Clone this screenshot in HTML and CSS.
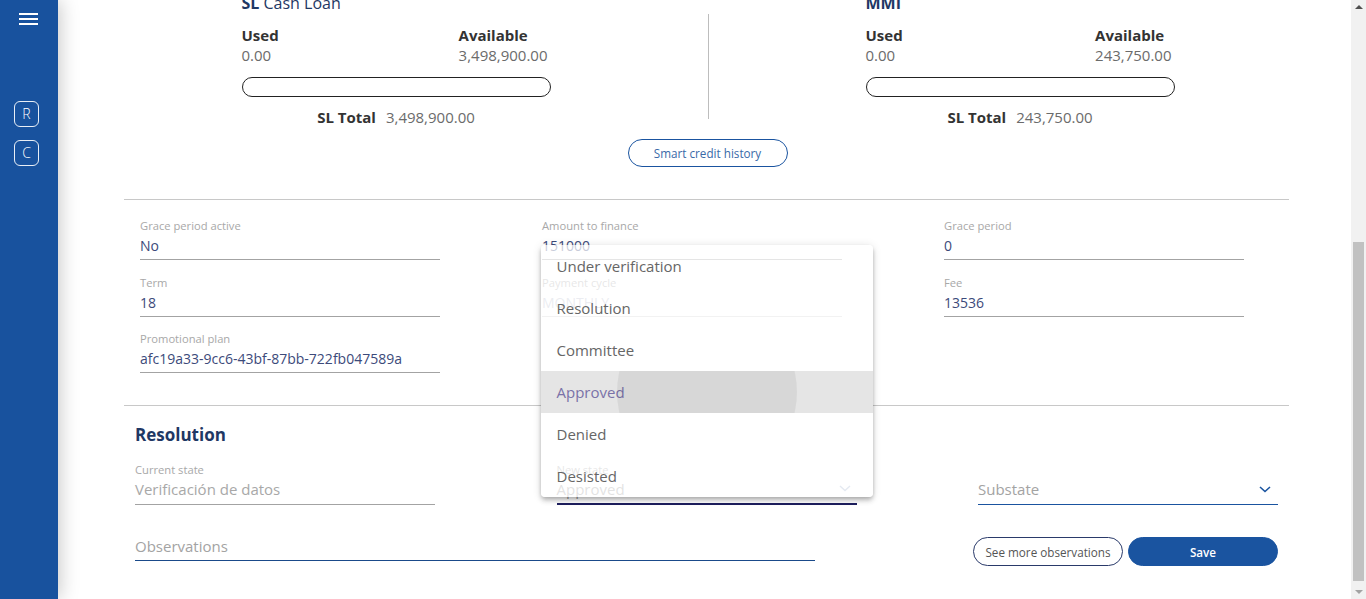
FILE: index.html
```html
<!DOCTYPE html>
<html lang="en">
<head>
<meta charset="utf-8">
<title>Credit request</title>
<link rel="stylesheet" href="styles.css">
</head>
<body>
<div class="app">
<nav class="sidebar">
  <button class="menu-btn" aria-label="Menu">
    <svg width="19" height="12" viewBox="0 0 19 12"><rect x="0" y="0" width="19" height="2" fill="#fff"/><rect x="0" y="5" width="19" height="2" fill="#fff"/><rect x="0" y="10" width="19" height="2" fill="#fff"/></svg>
  </button>
  <div class="nav-badges">
    <span class="badge">R</span>
    <span class="badge">C</span>
  </div>
</nav>

<main class="main" id="main">
  <div class="content">
    <section class="summary">
      <h1 class="page-title">Credit request</h1>
      <p class="summary-text">Client lines of credit</p>
    </section>

    <section class="lines">
      <div class="line-block">
        <h3 class="line-title"><b>SL</b> Cash Loan</h3>
        <div class="amounts">
          <div class="amount"><span class="amount-label">Used</span><span class="amount-value">0.00</span></div>
          <div class="amount"><span class="amount-label">Available</span><span class="amount-value">3,498,900.00</span></div>
        </div>
        <div class="bar"></div>
        <div class="total"><b>SL Total</b><span>3,498,900.00</span></div>
      </div>
      <div class="vline"></div>
      <div class="line-block">
        <h3 class="line-title"><b>MMI</b></h3>
        <div class="amounts">
          <div class="amount"><span class="amount-label">Used</span><span class="amount-value">0.00</span></div>
          <div class="amount"><span class="amount-label">Available</span><span class="amount-value">243,750.00</span></div>
        </div>
        <div class="bar"></div>
        <div class="total"><b>SL Total</b><span>243,750.00</span></div>
      </div>
    </section>

    <div class="history-row"><button class="btn btn-outline-blue">Smart credit history</button></div>

    <hr class="divider divider-top">

    <section class="fields">
      <div class="field"><span class="field-label">Grace period active</span><span class="field-value">No</span></div>
      <div class="field"><span class="field-label">Amount to finance</span><span class="field-value">151000</span></div>
      <div class="field"><span class="field-label">Grace period</span><span class="field-value">0</span></div>
      <div class="field"><span class="field-label">Term</span><span class="field-value">18</span></div>
      <div class="field field-disabled"><span class="field-label">Payment cycle</span><span class="field-value">MONTHLY</span></div>
      <div class="field"><span class="field-label">Fee</span><span class="field-value">13536</span></div>
      <div class="field"><span class="field-label">Promotional plan</span><span class="field-value">afc19a33-9cc6-43bf-87bb-722fb047589a</span></div>
    </section>

    <hr class="divider">

    <section class="resolution">
      <h2 class="section-title">Resolution</h2>
      <div class="res-grid">
        <div class="rfield rfield-disabled">
          <span class="rfield-label">Current state</span>
          <span class="rfield-value">Verificación de datos</span>
        </div>
        <div class="rfield rfield-select rfield-focused">
          <span class="rfield-label">New state</span>
          <span class="rfield-value">Approved</span>
          <svg class="chev" width="12" height="7" viewBox="0 0 12 7"><path d="M1 1 L6 5.5 L11 1" fill="none" stroke="currentColor" stroke-width="1.4"/></svg>
          <div class="select-panel" role="listbox">
            <div class="option">Under verification</div>
            <div class="option">Resolution</div>
            <div class="option">Committee</div>
            <div class="option option-active">Approved<span class="ripple"></span></div>
            <div class="option">Denied</div>
            <div class="option">Desisted</div>
          </div>
        </div>
        <div class="rfield rfield-select rfield-blue">
          <span class="rfield-label"></span>
          <span class="rfield-value rfield-placeholder">Substate</span>
          <svg class="chev chev-blue" width="12" height="7" viewBox="0 0 12 7"><path d="M1 1 L6 5.5 L11 1" fill="none" stroke="currentColor" stroke-width="1.6"/></svg>
        </div>
      </div>
      <div class="res-bottom">
        <div class="obs-field"><span class="rfield-placeholder">Observations</span></div>
        <div class="actions">
          <button class="btn btn-outline-navy">See more observations</button>
          <button class="btn btn-primary">Save</button>
        </div>
      </div>
    </section>
  </div>
</main>

<div class="scrollbar" aria-hidden="true">
  <span class="sb-arrow sb-up"></span>
  <div class="sb-track"><div class="sb-thumb"></div></div>
  <span class="sb-arrow sb-down"></span>
</div>
</div>
<script src="script.js"></script>
</body>
</html>
```

FILE: styles.css
```css
* { box-sizing: border-box; }
html, body { margin: 0; padding: 0; height: 100%; overflow: hidden; }
body {
  font-family: "Open Sans", "Liberation Sans", sans-serif;
  color: #333;
  background: #fff;
}
.app { display: flex; height: 100vh; }

.sidebar {
  position: relative;
  flex: 0 0 58px;
  background: #18529e;
  box-shadow: 2px 0 18px rgba(0,0,0,0.22);
  z-index: 20;
  display: flex;
  flex-direction: column;
}
.menu-btn {
  background: none; border: 0; padding: 0;
  margin: 13px 0 0 19px;
  width: 19px; height: 12px;
  display: block; cursor: pointer;
}
.menu-btn svg { display: block; }
.nav-badges {
  display: flex; flex-direction: column;
  gap: 13px;
  margin: 76px 0 0 14px;
}
.badge {
  width: 25px; height: 26px;
  border: 1.5px solid rgba(255,255,255,0.9);
  border-radius: 6px;
  color: #fff;
  font-size: 14px; font-weight: 300;
  display: flex; align-items: center; justify-content: center;
  line-height: 1;
}

.main {
  flex: 1 1 auto;
  height: 100vh;
  overflow-y: auto;
  overflow-x: hidden;
  scrollbar-width: none;
}
.main::-webkit-scrollbar { display: none; }
.content { margin-left: 66px; width: 1165px; }

.summary { height: 334px; padding-top: 30px; }
.page-title { margin: 0; font-size: 22px; color: #1f3864; font-weight: 700; }
.summary-text { margin: 12px 0 0; color: #777; font-size: 14px; }

.lines {
  display: flex; justify-content: center; gap: 157px;
  padding-left: 3px;
}
.line-block { width: 309px; display: flex; flex-direction: column; }
.line-title {
  margin: 0; font-size: 16px; line-height: 20px; font-weight: 400; color: #1f3864;
}
.line-title b { font-weight: 700; }
.amounts {
  display: flex; justify-content: space-between;
  margin-top: 13px; padding-right: 3px;
}
.amount { display: flex; flex-direction: column; }
.amount-label { font-size: 15px; line-height: 18px; font-weight: 700; color: #333; }
.amount-value { font-size: 15px; line-height: 18px; color: #6b6b6b; margin-top: 2px; }
.bar {
  height: 20px; margin-top: 13px;
  border: 1px solid #222; border-radius: 10px; background: #fff;
}
.total { display: flex; justify-content: center; gap: 10px; margin-top: 11px; font-size: 15px; line-height: 18px; }
.total b { font-weight: 700; color: #333; }
.total span { color: #6b6b6b; }
.vline { width: 1px; background: #bdbdbd; margin-top: 21px; height: 105px; }

.history-row { display: flex; justify-content: center; margin-top: 13px; padding-left: 2px; }
.btn {
  font-family: inherit; cursor: pointer;
  height: 29px; border-radius: 15px;
  font-size: 11.7px; padding: 0;
}
.btn-outline-blue {
  width: 160px; height: 28px; border-radius: 14px;
  background: #fff; border: 1px solid #1a54a0; color: #3a6aa8;
}

.divider { margin: 0; border: 0; border-top: 1px solid #c8c8c8; }
.divider-top { margin-top: 32px; }

.fields {
  display: grid;
  grid-template-columns: repeat(3, 300px);
  column-gap: 102px; row-gap: 15.5px;
  padding: 19px 0 32px 16px;
}
.field {
  display: flex; flex-direction: column;
  border-bottom: 1px solid #a3a3a3;
  padding-bottom: 4px;
}
.field-label { font-size: 11.2px; line-height: 13px; color: #a8a8a8; margin-bottom: 5px; }
.field-value { font-size: 14px; line-height: 18px; color: #3c4a7a; }
.field-disabled { border-bottom-color: #d0d0d0; }
.field-disabled .field-value { color: #b8bccb; }

.resolution { padding: 18px 11px 0; }
.section-title { margin: 0; font-size: 17px; line-height: 22px; font-weight: 700; color: #1f3864; }
.res-grid {
  display: grid; grid-template-columns: 300px 300px 300px;
  column-gap: 121.5px; margin-top: 17px;
}
.rfield {
  position: relative;
  display: flex; flex-direction: column;
  border-bottom: 1px solid #a3a3a3;
  padding-bottom: 5px;
}
.rfield-label { font-size: 11.2px; line-height: 13px; color: #a8a8a8; margin-bottom: 3px; height: 13px; }
.rfield-value { font-size: 15px; line-height: 20px; color: #3c4a7a; }
.rfield-disabled .rfield-value { color: #a8a8a8; }
.rfield-placeholder { font-size: 15px; line-height: 20px; color: #a3a3a3; }
.rfield-focused { border-bottom: 2px solid #1e1f5e; padding-bottom: 4px; }
.rfield-focused .rfield-value { color: #9a9a9a; }
.rfield-blue { border-bottom-color: #1a54a0; }
.chev { position: absolute; right: 6px; bottom: 11px; color: #9fb0cc; }
.chev-blue { color: #1a54a0; right: 7px; }

.select-panel {
  position: absolute;
  left: -16px; bottom: 6px;
  width: 332px;
  background: rgba(255,255,255,0.72);
  border-radius: 4px;
  box-shadow: 0 2px 4px -1px rgba(0,0,0,0.2), 0 4px 5px 0 rgba(0,0,0,0.14), 0 1px 10px 0 rgba(0,0,0,0.12);
  overflow: hidden;
  z-index: 5;
}
.option {
  position: relative; overflow: hidden;
  height: 42px; padding: 0 16px;
  display: flex; align-items: center;
  font-size: 15px; color: #666;
}
.option-active { background: #e5e5e5; color: #7a72a8; }
.ripple {
  position: absolute; left: 76px; top: -69px;
  width: 180px; height: 180px; border-radius: 50%;
  background: rgba(0,0,0,0.06);
}

.res-bottom {
  display: flex; justify-content: space-between; align-items: flex-end;
  margin-top: 30px; padding-bottom: 38px;
}
.obs-field {
  width: 680px; border-bottom: 1px solid #1a4a8a; padding-bottom: 3px;
}
.actions { display: flex; gap: 5px; margin-bottom: -5px; }
.btn-outline-navy { width: 150px; background: #fff; border: 1px solid #2a3a6a; color: #555; }
.btn-primary { width: 150px; background: #1a54a0; border: 1px solid #1a54a0; color: #fff; font-weight: 600; }

.scrollbar {
  flex: 0 0 15px;
  background: #f1f1f1;
  display: flex; flex-direction: column; align-items: center;
}
.sb-arrow { width: 0; height: 0; border-left: 4px solid transparent; border-right: 4px solid transparent; }
.sb-up { border-bottom: 4px solid #505050; margin-top: 5px; margin-bottom: 6px; }
.sb-down { border-top: 4px solid #a3a3a3; margin-top: auto; margin-bottom: 5px; }
.sb-track { width: 100%; padding: 0 2px; flex: 1 1 auto; display: flex; flex-direction: column; }
.sb-thumb { margin-top: 227px; height: 339px; background: #c1c1c1; }
```

FILE: script.js
```js
document.getElementById('main').scrollTop = 342;
```
